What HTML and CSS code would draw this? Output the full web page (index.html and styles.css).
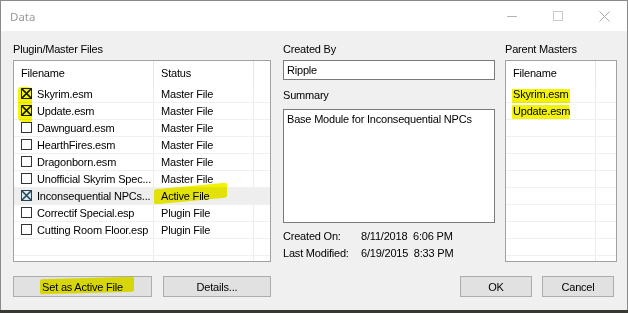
FILE: index.html
```html
<!DOCTYPE html>
<html>
<head>
<meta charset="utf-8">
<link rel="stylesheet" href="styles.css">
</head>
<body>
<div class="window">
  <div class="titlebar">
    <span class="title">Data</span>
    <div class="controls">
      <span class="ctl"><svg width="10" height="10" viewBox="0 0 10 10"><line x1="0" y1="5.5" x2="10" y2="5.5" stroke="#b4b4b4" stroke-width="1"/></svg></span>
      <span class="ctl"><svg width="10" height="10" viewBox="0 0 10 10"><rect x="0.5" y="0.5" width="9" height="9" fill="none" stroke="#c8c8c8" stroke-width="1"/></svg></span>
      <span class="ctl"><svg width="11" height="11" viewBox="0 0 11 11"><path d="M0.5 0.5 L10.5 10.5 M10.5 0.5 L0.5 10.5" stroke="#a8a8a8" stroke-width="1"/></svg></span>
    </div>
  </div>
  <div class="client">
    <div class="panes">
      <section class="pane pane-plugins">
        <div class="label">Plugin/Master Files</div>
        <div class="listbox">
          <div class="lv-head">
            <div class="c1">Filename</div><div class="c2">Status</div><div class="c3"></div>
          </div>
          <div class="lv-row"><div class="c1"><svg class="cb" width="11" height="11" viewBox="0 0 11 11"><rect x="0.5" y="0.5" width="10" height="10" fill="#fff" stroke="#222"/><path d="M1 1 L10 10 M10 1 L1 10" stroke="#111" stroke-width="1.7"/></svg><span>Skyrim.esm</span></div><div class="c2">Master File</div><div class="c3"></div></div>
          <div class="lv-row"><div class="c1"><svg class="cb" width="11" height="11" viewBox="0 0 11 11"><rect x="0.5" y="0.5" width="10" height="10" fill="#fff" stroke="#222"/><path d="M1 1 L10 10 M10 1 L1 10" stroke="#111" stroke-width="1.7"/></svg><span>Update.esm</span></div><div class="c2">Master File</div><div class="c3"></div></div>
          <div class="lv-row"><div class="c1"><svg class="cb" width="11" height="11" viewBox="0 0 11 11"><rect x="0.5" y="0.5" width="10" height="10" fill="#fff" stroke="#333"/></svg><span>Dawnguard.esm</span></div><div class="c2">Master File</div><div class="c3"></div></div>
          <div class="lv-row"><div class="c1"><svg class="cb" width="11" height="11" viewBox="0 0 11 11"><rect x="0.5" y="0.5" width="10" height="10" fill="#fff" stroke="#333"/></svg><span>HearthFires.esm</span></div><div class="c2">Master File</div><div class="c3"></div></div>
          <div class="lv-row"><div class="c1"><svg class="cb" width="11" height="11" viewBox="0 0 11 11"><rect x="0.5" y="0.5" width="10" height="10" fill="#fff" stroke="#333"/></svg><span>Dragonborn.esm</span></div><div class="c2">Master File</div><div class="c3"></div></div>
          <div class="lv-row"><div class="c1"><svg class="cb" width="11" height="11" viewBox="0 0 11 11"><rect x="0.5" y="0.5" width="10" height="10" fill="#fff" stroke="#333"/></svg><span>Unofficial Skyrim Spec...</span></div><div class="c2">Master File</div><div class="c3"></div></div>
          <div class="lv-row active"><div class="c1"><svg class="cb" width="11" height="11" viewBox="0 0 11 11"><rect x="0.5" y="0.5" width="10" height="10" fill="#dde8ee" stroke="#2b3f4c"/><path d="M1 1 L10 10 M10 1 L1 10" stroke="#1f4a5e" stroke-width="1.6"/></svg><span>Inconsequential NPCs...</span></div><div class="c2">Active File</div><div class="c3"></div></div>
          <div class="lv-row"><div class="c1"><svg class="cb" width="11" height="11" viewBox="0 0 11 11"><rect x="0.5" y="0.5" width="10" height="10" fill="#fff" stroke="#333"/></svg><span>Correctif Special.esp</span></div><div class="c2">Plugin File</div><div class="c3"></div></div>
          <div class="lv-row"><div class="c1"><svg class="cb" width="11" height="11" viewBox="0 0 11 11"><rect x="0.5" y="0.5" width="10" height="10" fill="#fff" stroke="#333"/></svg><span>Cutting Room Floor.esp</span></div><div class="c2">Plugin File</div><div class="c3"></div></div>
          <div class="lv-row"><div class="c1"></div><div class="c2"></div><div class="c3"></div></div>
          <div class="lv-row"><div class="c1"></div><div class="c2"></div><div class="c3"></div></div>
        </div>
      </section>

      <section class="pane pane-info">
        <div class="label">Created By</div>
        <div class="edit">Ripple</div>
        <div class="label label-summary">Summary</div>
        <div class="memo">Base Module for Inconsequential NPCs</div>
        <div class="dates">
          <div class="date-row"><span class="dk">Created On:</span><span class="dv">8/11/2018  6:06 PM</span></div>
          <div class="date-row"><span class="dk">Last Modified:</span><span class="dv">6/19/2015  8:33 PM</span></div>
        </div>
      </section>

      <section class="pane pane-masters">
        <div class="label">Parent Masters</div>
        <div class="listbox">
          <div class="lv-head"><div class="m1">Filename</div><div class="m2"></div></div>
          <div class="lv-row"><div class="m1">Skyrim.esm</div><div class="m2"></div></div>
          <div class="lv-row"><div class="m1">Update.esm</div><div class="m2"></div></div>
          <div class="lv-row"><div class="m1"></div><div class="m2"></div></div>
          <div class="lv-row"><div class="m1"></div><div class="m2"></div></div>
          <div class="lv-row"><div class="m1"></div><div class="m2"></div></div>
          <div class="lv-row"><div class="m1"></div><div class="m2"></div></div>
          <div class="lv-row"><div class="m1"></div><div class="m2"></div></div>
          <div class="lv-row"><div class="m1"></div><div class="m2"></div></div>
          <div class="lv-row"><div class="m1"></div><div class="m2"></div></div>
          <div class="lv-row"><div class="m1"></div><div class="m2"></div></div>
          <div class="lv-row"><div class="m1"></div><div class="m2"></div></div>
        </div>
      </section>
    </div>

    <div class="buttons">
      <div class="btn-group">
        <button class="btn btn-active">Set as Active File</button>
        <button class="btn btn-details">Details...</button>
      </div>
      <div class="btn-group btn-group-right">
        <button class="btn btn-ok">OK</button>
        <button class="btn btn-cancel">Cancel</button>
      </div>
    </div>
  </div>

  <span class="hl hl-checks"></span>
  <span class="hl hl-activefile"></span>
  <span class="hl hl-pm1"></span>
  <span class="hl hl-pm2"></span>
  <span class="hl hl-setactive"></span>
</div>
</body>
</html>
```

FILE: styles.css
```css
html, body {
  margin: 0;
  padding: 0;
  background: #3a3835;
  height: 313px;
  overflow: hidden;
}

.window {
  position: relative;
  box-sizing: border-box;
  width: 628px;
  height: 310px;
  border: 1px solid #8a8a8a;
  border-bottom: none;
  background: #f0f0f0;
  display: flex;
  flex-direction: column;
  font-family: "Liberation Sans", Arial, sans-serif;
  font-size: 11px;
  letter-spacing: -0.2px;
  color: #000;
}

.titlebar {
  height: 30px;
  flex: 0 0 30px;
  background: #fff;
  display: flex;
  align-items: center;
  justify-content: space-between;
}

.title {
  font-family: "Noto Sans", "Open Sans", sans-serif;
  font-size: 11.5px;
  letter-spacing: 0;
  color: #9a9a9a;
  padding-left: 9px;
}

.controls {
  display: flex;
  height: 30px;
}

.ctl {
  width: 46px;
  height: 30px;
  display: flex;
  align-items: center;
  justify-content: center;
}

.client {
  flex: 1;
  padding: 12px 10px 0 12px;
  display: flex;
  flex-direction: column;
}

.panes {
  display: flex;
  height: 219px;
}

.pane {
  display: flex;
  flex-direction: column;
}

.pane-plugins { width: 258px; margin-right: 12px; }
.pane-info { width: 212px; margin-right: 10px; }
.pane-masters { width: 112px; }

.label {
  height: 13px;
  line-height: 13px;
  margin-bottom: 4px;
  white-space: nowrap;
}

.listbox {
  box-sizing: border-box;
  height: 202px;
  border: 1px solid #a2a2a2;
  background: #fff;
  overflow: hidden;
}

.lv-head {
  display: flex;
  height: 25px;
  line-height: 25px;
}

.lv-row {
  display: flex;
  height: 17px;
  line-height: 17px;
  box-sizing: border-box;
  border-bottom: 1px solid #f0f0f0;
  white-space: nowrap;
}

.lv-row.active {
  background: #eeeeee;
}

.c1, .c2, .m1 {
  box-sizing: border-box;
  border-right: 1px solid #ececec;
  padding-left: 7px;
  overflow: hidden;
}

.c1 { width: 140px; display: flex; align-items: center; }
.c2 { width: 100px; }
.c3 { flex: 1; }
.m1 { width: 90px; }
.m2 { flex: 1; }

.lv-head .c1, .lv-head .c2, .lv-head .m1 {
  border-right-color: #e5e5e5;
}

.lv-row .c1 { line-height: 16px; }
.lv-row .c2, .lv-row .m1 { line-height: 16px; }

.cb {
  flex: 0 0 11px;
  margin-right: 5px;
  margin-top: -1px;
}

.edit {
  box-sizing: border-box;
  height: 20px;
  line-height: 18px;
  border: 1px solid #7a7a7a;
  background: #fff;
  padding-left: 3px;
}

.label-summary {
  margin-top: 8px;
  margin-bottom: 7px;
  height: 14px;
  line-height: 14px;
}

.memo {
  box-sizing: border-box;
  height: 114px;
  border: 1px solid #7a7a7a;
  background: #fff;
  padding: 3px 3px;
  line-height: 13px;
}

.dates {
  margin-top: 5px;
}

.date-row {
  display: flex;
  height: 17px;
  line-height: 17px;
  white-space: pre;
}

.dk { width: 78px; }

.buttons {
  margin-top: 14px;
  display: flex;
  justify-content: space-between;
}

.btn-group {
  display: flex;
}

.btn-group-right {
  margin-right: 3px;
}

.btn {
  box-sizing: border-box;
  height: 21px;
  border: 1px solid #adadad;
  background: #e1e1e1;
  font-family: "Liberation Sans", Arial, sans-serif;
  font-size: 11px;
  letter-spacing: -0.2px;
  color: #000;
  padding: 0;
  margin: 0;
}

.btn-active { width: 139px; margin-right: 11px; }
.btn-details { width: 108px; }
.btn-ok { width: 72px; margin-right: 10px; }
.btn-cancel { width: 72px; }

.hl {
  position: absolute;
  background: #f3f30a;
  mix-blend-mode: multiply;
  pointer-events: none;
}

.hl-checks {
  left: 17px;
  top: 86px;
  width: 14px;
  height: 35px;
  border-radius: 3px 4px 2px 5px;
}

.hl-activefile {
  left: 153px;
  top: 185px;
  width: 73px;
  height: 15px;
  transform: skewY(-5.5deg);
  border-radius: 2px;
}

.hl-pm1 {
  left: 511px;
  top: 88px;
  width: 58px;
  height: 14px;
}

.hl-pm2 {
  left: 511px;
  top: 104px;
  width: 57px;
  height: 14px;
}

.hl-setactive {
  left: 39px;
  top: 277px;
  width: 94px;
  height: 15px;
  transform: skewY(-1.5deg);
  border-radius: 2px;
}
```
